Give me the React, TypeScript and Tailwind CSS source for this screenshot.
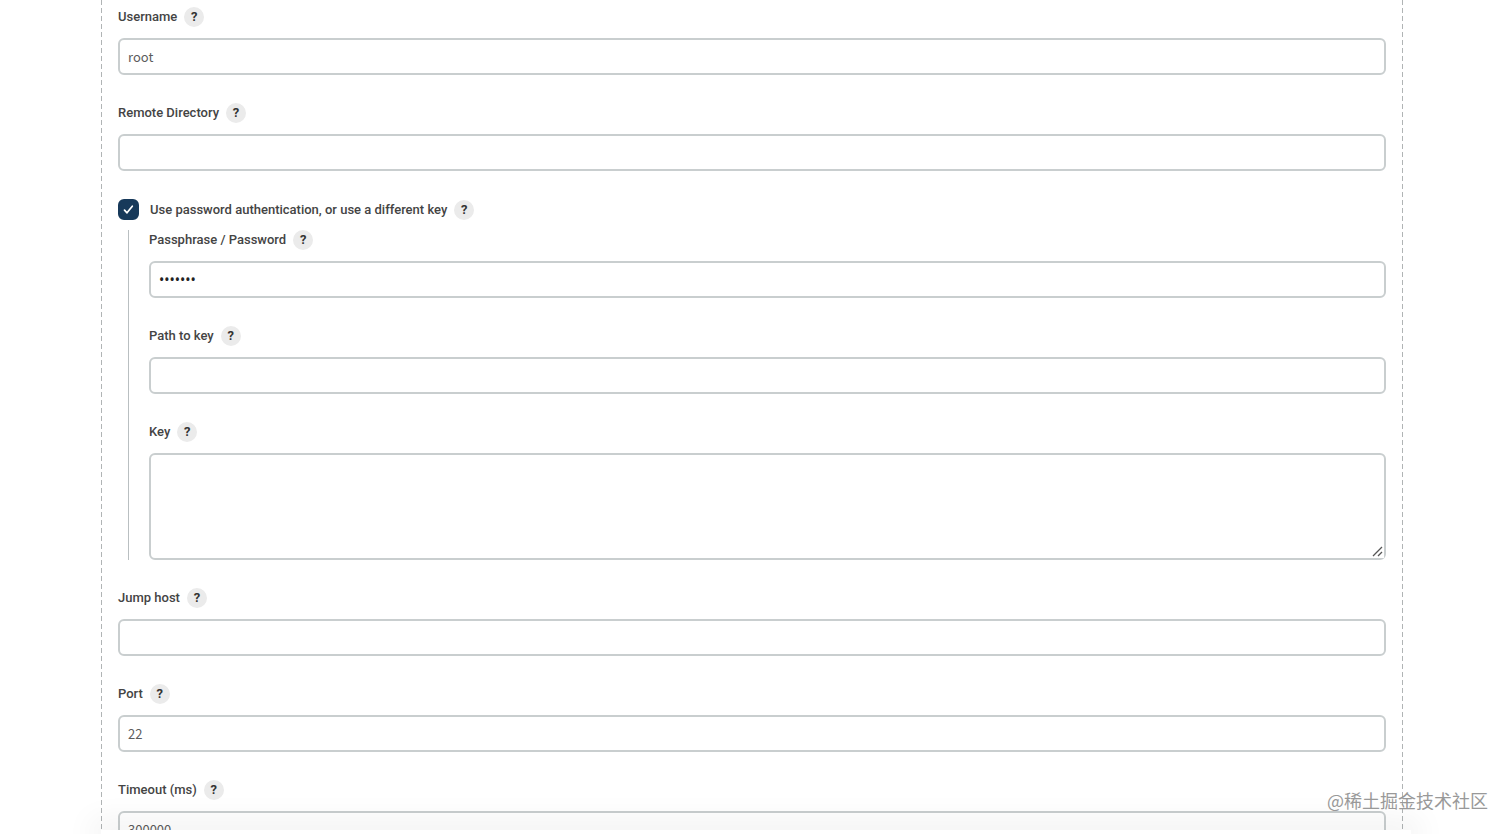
import React, { useId } from 'react';

interface FieldProps {
  label: string;
  type?: string;
  value?: string;
  multiline?: boolean;
}

const control =
  'block w-full rounded-md border-2 border-[#c9cecf] bg-white outline-none focus:border-[#1d3f5e]';

const HelpButton: React.FC<{ topic: string }> = ({ topic }) => (
  <button
    type="button"
    aria-label={`Help for feature: ${topic}`}
    className="flex h-5 w-5 items-center justify-center rounded-full bg-[#ebebeb] text-[13px] font-bold text-[#333333]"
  >
    ?
  </button>
);

const Field: React.FC<FieldProps> = ({ label, type = 'text', value = '', multiline }) => {
  const id = useId();
  const tone =
    type === 'password'
      ? "font-['Noto_Sans',sans-serif] text-sm text-[#222222]"
      : "font-['Noto_Sans_CJK_SC',sans-serif] text-[13px] text-[#5c5c5c]";
  return (
    <div>
      <div className="mb-[11px] flex h-5 items-center gap-[7px]">
        <label htmlFor={id}>{label}</label>
        <HelpButton topic={label} />
      </div>
      {multiline ? (
        <textarea id={id} defaultValue={value} className={`${control} ${tone} h-[107px] resize-y p-2`} />
      ) : (
        <input id={id} type={type} defaultValue={value} className={`${control} ${tone} h-[37px] px-2 font-normal`} />
      )}
    </div>
  );
};

const Edge: React.FC = () => (
  <div className="w-px shrink-0 bg-[repeating-linear-gradient(to_bottom,#b0b4b5_0px,#b0b4b5_5px,transparent_5px,transparent_8px)]" />
);

const App: React.FC = () => (
  <div className="relative flex h-screen flex-col overflow-hidden bg-white font-[Roboto,sans-serif] text-[13px] font-medium text-[#444444]">
    <main className="flex min-h-0 flex-1 overflow-hidden pl-[101px] pr-[109px]">
      <Edge />
      <form className="flex h-max min-w-0 flex-1 flex-col gap-7 px-4 pt-[7px]">
        <Field label="Username" value="root" />
        <Field label="Remote Directory" />

        <div>
          <div className="flex h-[21px] items-center">
            <span className="relative mr-[11px] h-[21px] w-[21px]">
              <input
                id="use-password"
                type="checkbox"
                defaultChecked
                className="peer block h-[21px] w-[21px] appearance-none rounded-md border-2 border-[#c9cecf] checked:border-[#17395a] checked:bg-[#17395a]"
              />
              <svg
                viewBox="0 0 21 21"
                className="pointer-events-none absolute inset-0 hidden h-[21px] w-[21px] peer-checked:block"
                fill="none"
                stroke="white"
                strokeWidth="1.7"
                strokeLinecap="round"
                strokeLinejoin="round"
              >
                <path d="M6.5 11.2 9 13.8 14.3 7.2" />
              </svg>
            </span>
            <label htmlFor="use-password" className="mr-[7px]">
              Use password authentication, or use a different key
            </label>
            <HelpButton topic="Use password authentication" />
          </div>
          <div className="ml-[10px] mt-[10px] flex flex-col gap-7 border-l border-[#b9bfc1] pl-5">
            <Field label="Passphrase / Password" type="password" value="1234567" />
            <Field label="Path to key" />
            <div className="relative">
              <Field label="Key" multiline />
              <svg
                viewBox="0 0 12 12"
                className="pointer-events-none absolute bottom-[2px] right-[2px] h-3 w-3 bg-white"
                fill="none"
                stroke="#555555"
                strokeWidth="1.3"
              >
                <path d="M1 10 10 1M6 10 10 6" />
              </svg>
            </div>
          </div>
        </div>

        <Field label="Jump host" />
        <Field label="Port" value="22" />
        <Field label="Timeout (ms)" value="300000" />
      </form>
      <Edge />
    </main>

    <footer className="relative mx-[101px] h-1 shrink-0 bg-white shadow-[0_0_30px_10px_rgba(0,0,0,0.06)]" />

    <p className="absolute bottom-5 right-6 font-['Noto_Sans_CJK_SC',sans-serif] text-lg leading-7 font-normal text-[#999999]">
      @稀土掘金技术社区
    </p>
  </div>
);

export default App;
